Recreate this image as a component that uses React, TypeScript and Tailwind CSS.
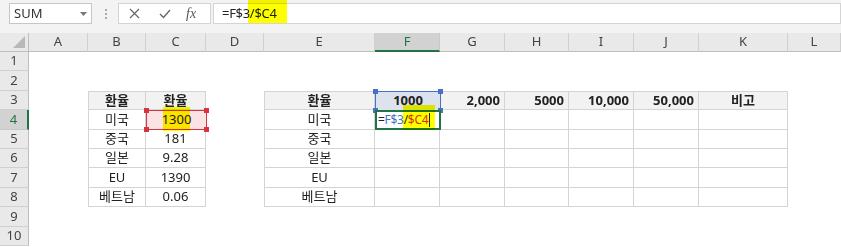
const FONT = { fontFamily: '"Noto Sans", "Noto Sans CJK KR", sans-serif' };

const colDefs = ["A", "B", "C", "D", "E", "F", "G", "H", "I", "J", "K", "L"];

type Cell = { text: string; bold?: boolean; align?: "center" | "right" | "left"; head?: boolean };

const countries = ["미국", "중국", "일본", "EU", "베트남"];
const rates = ["1300", "181", "9.28", "1390", "0.06"];

function getCell(r: number, c: string): Cell | null {
  if (r < 3 || r > 8) return null;
  const i = r - 4;
  if (c === "B") return r === 3 ? { text: "환율", bold: true, head: true } : { text: countries[i] };
  if (c === "C") return r === 3 ? { text: "환율", bold: true, head: true } : { text: rates[i] };
  if (c === "E") return r === 3 ? { text: "환율", bold: true, head: true } : { text: countries[i] };
  const heads: Record<string, Cell> = {
    F: { text: "1000", bold: true, head: true },
    G: { text: "2,000", bold: true, head: true, align: "right" },
    H: { text: "5000", bold: true, head: true, align: "right" },
    I: { text: "10,000", bold: true, head: true, align: "right" },
    J: { text: "50,000", bold: true, head: true, align: "right" },
    K: { text: "비고", bold: true, head: true },
  };
  if (heads[c]) return r === 3 ? heads[c] : { text: "" };
  return null;
}

function Handles({ color }: { color: string }) {
  const cls = `absolute h-[5px] w-[5px] ${color}`;
  return (
    <>
      <div className={`${cls} -left-[3px] -top-[3px]`} />
      <div className={`${cls} -right-[3px] -top-[3px]`} />
      <div className={`${cls} -left-[3px] -bottom-[3px]`} />
      <div className={`${cls} -right-[3px] -bottom-[3px]`} />
    </>
  );
}

export default function App() {
  return (
    <div className="relative h-[247px] w-[841px] overflow-hidden bg-white text-[13px] text-[#222]" style={FONT}>
      {/* formula bar */}
      <div className="flex h-[33px] items-start bg-[#f3f3f3] pt-[3px]">
        <div className="ml-[9px] flex h-[21px] w-[83px] items-center justify-between border border-[#c6c6c6] bg-white pl-[4px] pr-[4px] text-[13px] text-[#333]">
          <span>SUM</span>
          <svg width="7" height="4" viewBox="0 0 7 4">
            <path d="M0 0 L7 0 L3.5 4 z" fill="#777" />
          </svg>
        </div>
        <div className="ml-[12px] flex h-[21px] w-[3px] flex-col items-center justify-center gap-[2px]">
          <div className="h-[2px] w-[2px] bg-[#aaa]" />
          <div className="h-[2px] w-[2px] bg-[#aaa]" />
          <div className="h-[2px] w-[2px] bg-[#aaa]" />
        </div>
        <div className="ml-[11px] flex h-[21px] w-[93px] items-center border border-[#d4d4d4] bg-white">
          <svg className="ml-[10px]" width="11" height="11" viewBox="0 0 11 11">
            <path d="M1 1 L10 10 M10 1 L1 10" stroke="#666" strokeWidth="1.2" />
          </svg>
          <svg className="ml-[19px]" width="12" height="10" viewBox="0 0 12 10">
            <path d="M1 5 L4.5 8.5 L11 1" stroke="#666" strokeWidth="1.4" fill="none" />
          </svg>
          <span className="ml-[15px] italic text-[#555]" style={{ fontFamily: '"Liberation Serif", serif', fontSize: 14 }}>
            fx
          </span>
        </div>
        <div className="ml-[2px] flex h-[21px] flex-1 items-center border border-[#d4d4d4] bg-white pl-[8px] text-[13px] tracking-[-0.3px] text-[#222]">
          =F$3/$C4
        </div>
      </div>

      {/* sheet grid */}
      <div className="grid grid-cols-[29px_59px_58px_60px_58px_111px_65px_65px_64px_65px_65px_89px_53px] grid-rows-[19px_repeat(10,19.4px)]">
        {/* corner */}
        <div className="relative border-b border-r border-[#bdbdbd] bg-[#e9e9e9]">
          <svg className="absolute bottom-[3px] right-[3px]" width="12" height="12" viewBox="0 0 12 12">
            <path d="M12 0 L12 12 L0 12 z" fill="#b8b8b8" />
          </svg>
        </div>
        {colDefs.map((c) =>
          c === "F" ? (
            <div key={c} className="flex items-center justify-center border-b-2 border-r border-b-[#217346] border-r-[#c8c8c8] bg-[#d2d2d2] text-[#217346]">
              {c}
            </div>
          ) : (
            <div key={c} className="flex items-center justify-center border-b border-r border-b-[#bdbdbd] border-r-[#d0d0d0] bg-[#e9e9e9] text-[#444]">
              {c}
            </div>
          )
        )}
        {Array.from({ length: 10 }, (_, ri) => {
          const r = ri + 1;
          return [
            r === 4 ? (
              <div key={`h${r}`} className="flex items-center justify-center border-b border-r-2 border-b-[#c8c8c8] border-r-[#217346] bg-[#d2d2d2] text-[#217346]">
                {r}
              </div>
            ) : (
              <div key={`h${r}`} className="flex items-center justify-center border-b border-r border-b-[#d0d0d0] border-r-[#bdbdbd] bg-[#e9e9e9] text-[#444]">
                {r}
              </div>
            ),
            ...colDefs.map((c) => {
              const cell = getCell(r, c);
              if (!cell) return <div key={`${c}${r}`} />;
              const first = c === "B" || c === "E";
              const top = r === 3;
              return (
                <div
                  key={`${c}${r}`}
                  className={`flex items-center border-[#d4d4d4] border-r border-b ${first ? "border-l" : ""} ${top ? "border-t" : ""} ${
                    cell.head ? "bg-[#f2f2f2]" : "bg-white"
                  } ${cell.bold ? "font-bold" : ""} ${
                    cell.align === "right" ? "justify-end pr-[4px]" : "justify-center"
                  }`}
                >
                  {cell.text}
                </div>
              );
            }),
          ];
        })}
      </div>

      {/* formula bar highlighter */}
      <div className="absolute left-[248px] top-0 h-[23px] w-[39px] bg-[#ffff00] mix-blend-multiply" />

      {/* C4 reference range */}
      <div className="absolute left-[146px] top-[110px] flex h-[20px] w-[61px] items-center justify-center border border-[#d9333f] bg-[#fbe3e4]">
        <span>1300</span>
        <Handles color="bg-[#d9333f]" />
      </div>
      <div className="absolute left-[163px] top-[107px] h-[24px] w-[27px] bg-[#ffff00] mix-blend-multiply" />

      {/* F3 reference range */}
      <div className="absolute left-[375px] top-[91px] flex h-[20px] w-[66px] items-center justify-center border border-[#4472c4] bg-[#dde3ee] font-bold">
        <span>1000</span>
        <Handles color="bg-[#4472c4]" />
      </div>

      {/* F4 editing cell */}
      <div className="absolute left-[375px] top-[110px] flex h-[20px] w-[66px] items-center border-2 border-[#217346] bg-white pl-[1px] text-[12px] tracking-[-0.3px]">
        <span>=</span>
        <span className="text-[#4472c4]">F$3</span>
        <span>/</span>
        <span className="text-[#d9333f]">$C4</span>
        <span className="ml-[1px] h-[14px] w-[1px] bg-[#222]" />
      </div>
      <div className="absolute left-[403px] top-[105px] h-[25px] w-[32px] bg-[#ffff00] mix-blend-multiply" />
    </div>
  );
}
